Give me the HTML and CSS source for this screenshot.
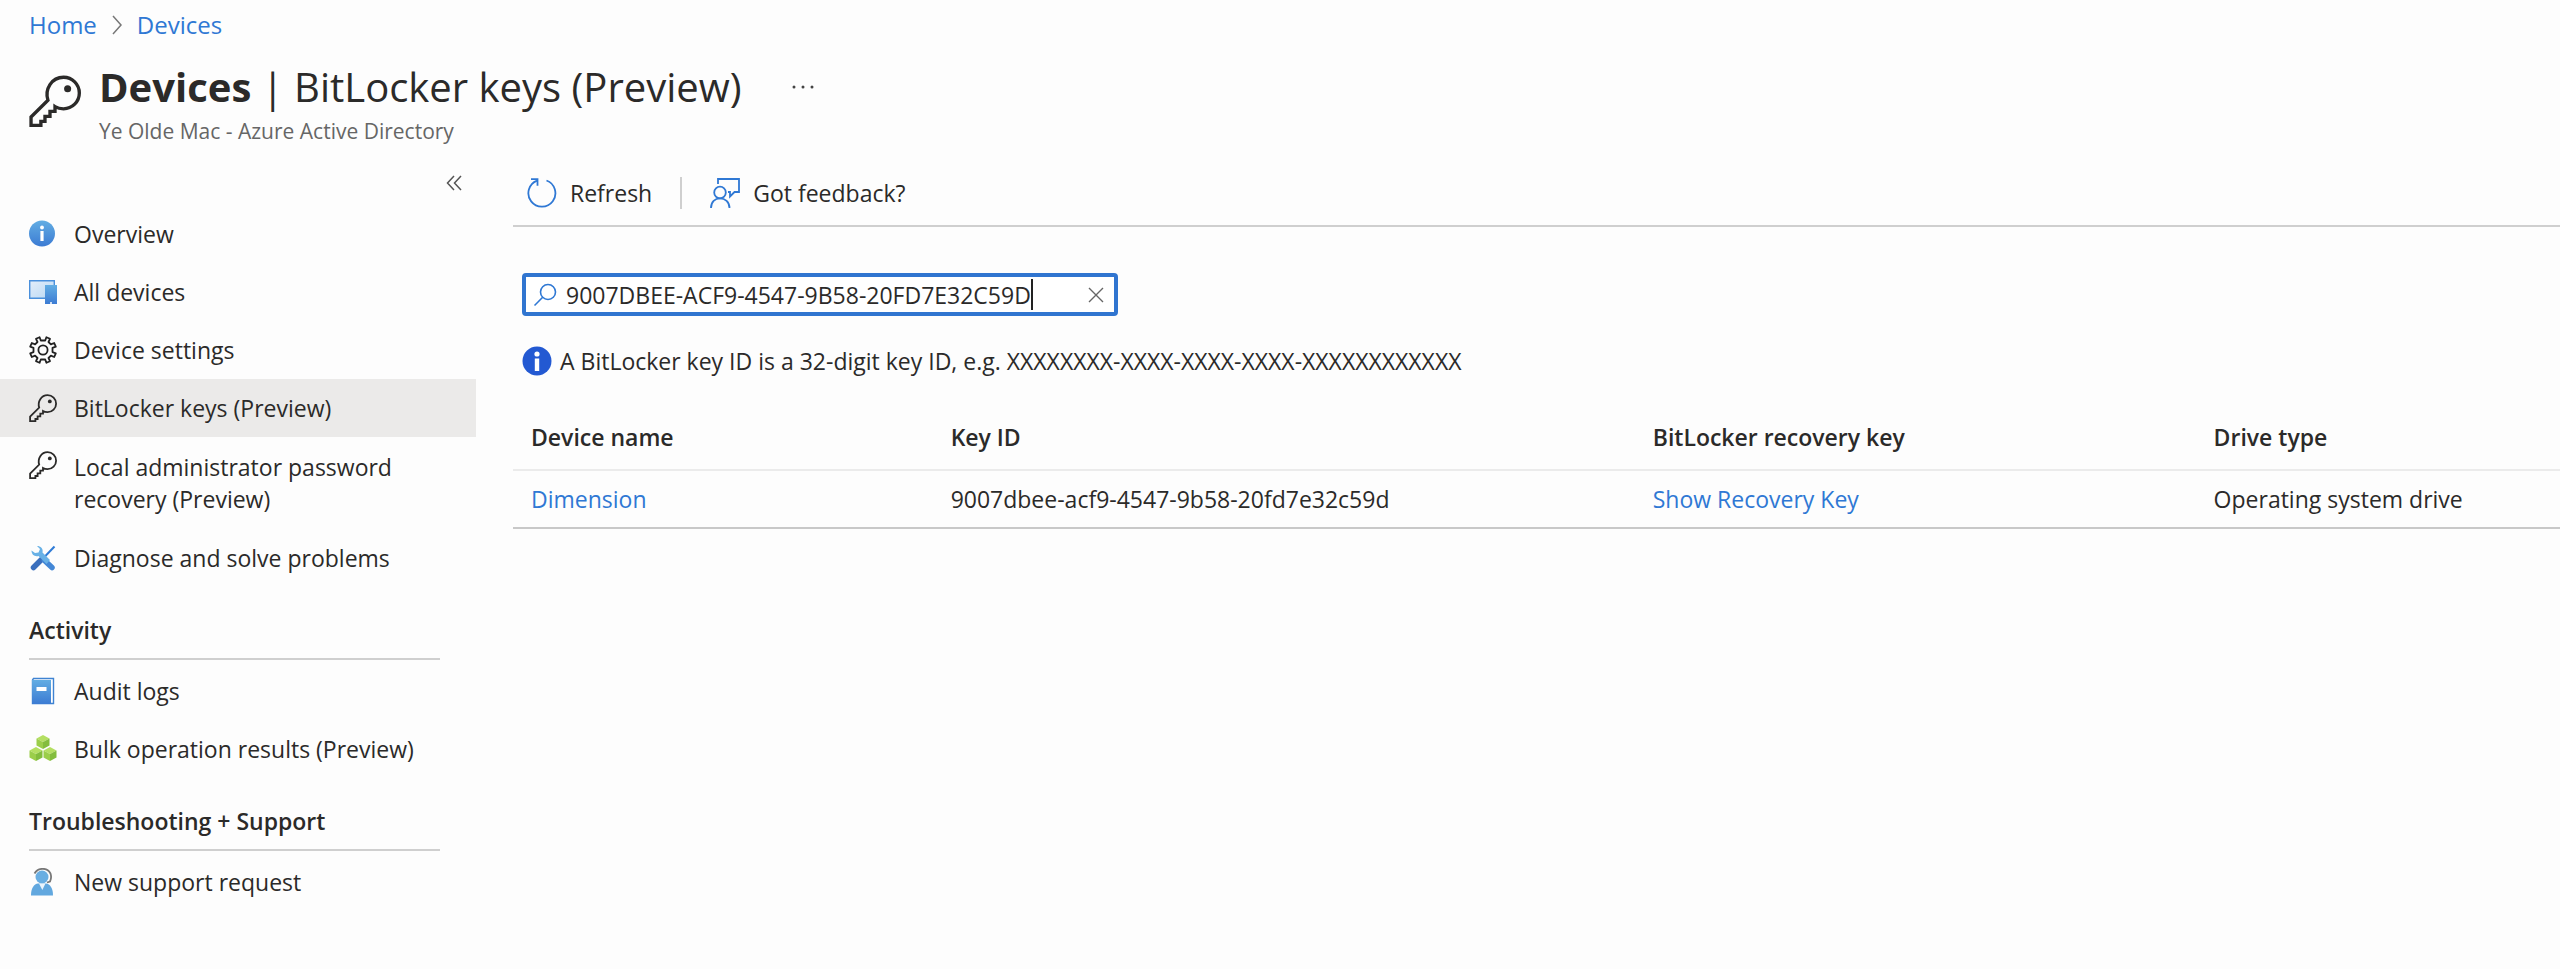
FILE: index.html
```html
<!DOCTYPE html>
<html lang="en">
<head>
    <meta charset="UTF-8">
    <meta name="viewport" content="width=device-width, initial-scale=1.0">
    <title>Devices | BitLocker keys (Preview)</title>
    <link rel="stylesheet" href="styles.css">
</head>
<body>
    <!-- shared shapes -->
    <svg class="defs" aria-hidden="true">
        <defs>
            <linearGradient id="blue" x1="0" y1="0" x2="0" y2="1">
                <stop offset="0" stop-color="#62ade3"/>
                <stop offset="1" stop-color="#3c7bd3"/>
            </linearGradient>
            <linearGradient id="screen" x1="0" y1="0" x2="1" y2="1">
                <stop offset="0" stop-color="#e4eefa"/>
                <stop offset="1" stop-color="#b9d8f3"/>
            </linearGradient>
        </defs>
        <symbol id="key" viewBox="0 0 28 28">
            <path d="M10.2 13.6C8.3 7.6 12.2 1.2 18.6 1.2a8.5 8.5 0 0 1 0 17c-1.700 0-3.300-.4-4.600-1.200v2.600h-2.700v2.700H8.600V25H6.400v2.100H1.100v-4.500z" fill="none" stroke="currentColor" stroke-width="1.800"/>
            <circle cx="20.800" cy="7.400" r="1.900" fill="currentColor"/>
        </symbol>
        <symbol id="cube" viewBox="0 0 14 14">
            <path d="M7 0l6.500 3.400L7 7 .5 3.400z" fill="#b4df62"/>
            <path d="M.5 3.400L7 7v7L.5 10.600z" fill="#9bce4a"/>
            <path d="M13.500 3.400L7 7v7l6.500-3.400z" fill="#83bd3d"/>
        </symbol>
    </svg>

    <header>
        <nav class="breadcrumb">
            <a href="#">Home</a>
            <svg class="chevron" viewBox="0 0 10 20"><path d="M1 1l8 9-8 9" fill="none" stroke="#777" stroke-width="1.5"/></svg>
            <a href="#">Devices</a>
        </nav>
        <div class="titlebar">
            <svg class="title-icon"><use href="#key"/></svg>
            <div>
                <div class="title-row">
                    <h1><b>Devices</b> | BitLocker keys (Preview)</h1>
                    <button class="more" aria-label="More">
                        <svg viewBox="0 0 22 4"><circle cx="2" cy="2" r="1.5"/><circle cx="11" cy="2" r="1.5"/><circle cx="20" cy="2" r="1.5"/></svg>
                    </button>
                </div>
                <p class="subtitle">Ye Olde Mac - Azure Active Directory</p>
            </div>
        </div>
    </header>

    <div class="container">
        <aside>
            <button class="collapse" aria-label="Collapse menu">
                <svg viewBox="0 0 16 16"><path d="M8 1L1.500 8 8 15M15 1L8.500 8 15 15" fill="none" stroke="#555" stroke-width="1.500"/></svg>
            </button>
            <nav>
                <a class="item" href="#">
                    <svg viewBox="0 0 28 28"><circle cx="13" cy="13.500" r="13" fill="url(#blue)"/><circle cx="13" cy="7.500" r="1.900" fill="#fff"/><path d="M11.400 11h3.200v10h-3.200z" fill="#fff"/></svg>
                    Overview
                </a>
                <a class="item" href="#">
                    <svg viewBox="0 0 28 28"><path d="M.7 2.700h24.600v17.500H.7z" fill="url(#screen)" stroke="#4a90dc" stroke-width="1.400"/><path d="M16 7h12v19H16z" fill="url(#blue)"/><circle cx="22" cy="25" r="1" fill="#fff"/></svg>
                    All devices
                </a>
                <a class="item" href="#">
                    <svg viewBox="0 0 28 28"><g fill="none" stroke="#222" stroke-width="1.800" stroke-linejoin="round"><path d="M11.800 4.500L10.600 1.200 7 2.800 8.500 6 6.100 8.400 2.800 7 1.200 10.700l3.300 1.200v4.200l-3.300 1.200L2.800 21l3.300-1.400L8.500 22 7 25.200l3.600 1.600 1.200-3.300h4.400l1.200 3.300 3.600-1.600-1.500-3.200 2.400-2.400 3.300 1.400 1.600-3.700-3.300-1.200v-4.200l3.300-1.200L25.200 7l-3.300 1.400L19.500 6 21 2.800l-3.600-1.600-1.200 3.300z"/><circle cx="14" cy="14" r="4.600"/></g></svg>
                    Device settings
                </a>
                <a class="item selected" href="#">
                    <svg><use href="#key"/></svg>
                    BitLocker keys (Preview)
                </a>
                <a class="item two-line" href="#">
                    <svg><use href="#key"/></svg>
                    Local administrator password recovery (Preview)
                </a>
                <a class="item" href="#">
                    <svg viewBox="0 0 28 28"><path d="M25.500 2.500L13 15.500" stroke="#2f7bd6" stroke-width="2"/><path d="M12.500 15.500L4.500 23.500" stroke="#3a6fbd" stroke-width="5.500" stroke-linecap="round"/><path d="M15.500 16.500l7.500 7" stroke="#4387d6" stroke-width="5.500" stroke-linecap="round"/><path d="M2.500 6.500c0 4 3 6.500 7 5.500l8 8 3.500-4-7.500-7.500c1-4-2-6.500-5.500-6.500L11 5 9.500 8.500 6 9z" fill="#68b1e6"/></svg>
                    Diagnose and solve problems
                </a>

                <h2>Activity</h2>
                <a class="item" href="#">
                    <svg viewBox="0 0 28 28"><path d="M4.500 1.500h20v25h-21V3z" fill="#fff" stroke="#3f83d2" stroke-width="1.400"/><path d="M3 3h19v24H3z" fill="url(#blue)"/><path d="M7.500 10h10v4h-10z" fill="#fff"/></svg>
                    Audit logs
                </a>
                <a class="item" href="#">
                    <svg viewBox="0 0 28 28"><use href="#cube" x="7" y="0" width="14" height="14"/><use href="#cube" x="0" y="12" width="14" height="14"/><use href="#cube" x="14" y="12" width="14" height="14"/></svg>
                    Bulk operation results (Preview)
                </a>

                <h2>Troubleshooting + Support</h2>
                <a class="item" href="#">
                    <svg viewBox="0 0 28 28"><path d="M5.500 5.500C9-.5 18-1 21.500 5.500c1 3 .5 6-.5 8l-3 1" fill="none" stroke="#777" stroke-width="1.800"/><circle cx="13" cy="9" r="6.500" fill="#69aee2"/><path d="M2 27.500C2 20 5 16 9 15.500h8c4 .5 7 4.500 7 12z" fill="#62a8df"/><path d="M10 15.500h6.500l-3.200 6.500z" fill="#eaf4fc"/></svg>
                    New support request
                </a>
            </nav>
        </aside>

        <main>
            <div class="toolbar">
                <button class="tool">
                    <svg viewBox="0 0 30 30"><path d="M19.500 2.500A13.500 13.500 0 1 1 10 2.600" fill="none" stroke="#2f78d4" stroke-width="1.800"/><path d="M4 1.200h6.500v6.500" fill="none" stroke="#2f78d4" stroke-width="1.800"/></svg>
                    Refresh
                </button>
                <span class="divider"></span>
                <button class="tool">
                    <svg viewBox="0 0 30 30"><g fill="none" stroke="#2f78d4" stroke-width="1.800"><path d="M8 6V1h21v13h-4.500L20 18.500V14h-2"/><circle cx="10" cy="14.500" r="5.800"/><path d="M1 30c0-6 4-9.700 9-9.700s9.500 3.700 9.500 9.700"/></g></svg>
                    Got feedback?
                </button>
            </div>

            <form>
                <div class="search">
                    <svg class="glass" viewBox="0 0 24 24"><g fill="none" stroke="#2f78d4" stroke-width="1.600"><circle cx="15" cy="9" r="7.500"/><path d="M9.700 14.300L1.500 22.500"/></g></svg>
                    <input type="text" id="keyId" aria-label="Key ID" value="9007DBEE-ACF9-4547-9B58-20FD7E32C59D">
                    <span class="caret"></span>
                    <button type="button" class="clear" aria-label="Clear">
                        <svg viewBox="0 0 16 16"><path d="M1 1l14 14M15 1L1 15" stroke="#666" stroke-width="1.400"/></svg>
                    </button>
                </div>
                <p class="hint">
                    <svg viewBox="0 0 30 30"><circle cx="15" cy="15" r="14.500" fill="#2359d2"/><circle cx="15" cy="8" r="2.600" fill="#fff"/><path d="M12.800 12.500h4.400v12.500h-4.400z" fill="#fff"/></svg>
                    A BitLocker key ID is a 32-digit key ID, e.g. XXXXXXXX-XXXX-XXXX-XXXX-XXXXXXXXXXXX
                </p>
            </form>

            <table>
                <thead>
                    <tr>
                        <th class="col-name">Device name</th>
                        <th class="col-id">Key ID</th>
                        <th class="col-key">BitLocker recovery key</th>
                        <th>Drive type</th>
                    </tr>
                </thead>
                <tbody>
                    <tr>
                        <td><a href="#">Dimension</a></td>
                        <td>9007dbee-acf9-4547-9b58-20fd7e32c59d</td>
                        <td><a href="#">Show Recovery Key</a></td>
                        <td>Operating system drive</td>
                    </tr>
                </tbody>
            </table>
        </main>
    </div>
</body>
</html>
```
FILE: styles.css
```css
*{
    margin: 0;
    padding: 0;
    box-sizing: border-box;
}
body{
    background-color: #fdfdfd;
    color: #2b2a29;
    font-family: "Open Sans", "Noto Sans", sans-serif;
    font-size: 23px;
    line-height: 32px;
}
a{
    color: #2f78d4;
    text-decoration: none;
}
button{
    background: none;
    border: none;
    color: inherit;
    font: inherit;
}
svg{
    display: block;
    flex-shrink: 0;
}
.defs{
    position: absolute;
    width: 0;
    height: 0;
}

/* header */
header{
    padding: 9px 29px 0;
}
.breadcrumb{
    display: flex;
    align-items: center;
    gap: 15px;
    font-size: 24px;
}
.chevron{
    width: 10px;
    height: 20px;
}
.titlebar{
    display: flex;
    align-items: center;
    gap: 18px;
    margin-top: 16px;
}
.title-icon{
    width: 52px;
    height: 52px;
}
.title-row{
    display: flex;
    align-items: center;
    gap: 50px;
}
h1{
    font-size: 40px;
    font-weight: 400;
    line-height: 60px;
}
h1 b{
    font-weight: 700;
}
.more svg{
    width: 22px;
    height: 4px;
    fill: #444;
}
.subtitle{
    color: #666;
    font-size: 21px;
    line-height: 28px;
}

/* layout */
.container{
    display: flex;
    gap: 37px;
    margin-top: 16px;
}
aside{
    width: 476px;
    flex-shrink: 0;
}
.collapse{
    display: block;
    margin: 14px 14px 14px auto;
}
.collapse svg{
    width: 16px;
    height: 16px;
}
.item{
    display: flex;
    align-items: center;
    gap: 17px;
    height: 58px;
    padding: 0 36px 0 29px;
    color: inherit;
}
.item svg{
    width: 28px;
    height: 28px;
}
.selected{
    background-color: #ebeae9;
}
.two-line{
    align-items: flex-start;
    height: auto;
    padding-top: 14px;
    padding-bottom: 14px;
}
h2{
    margin: 27px 36px 2px 29px;
    padding-bottom: 12px;
    border-bottom: 2px solid #cfcfcf;
    font-size: 23px;
    font-weight: 600;
    line-height: 32px;
}

/* content */
main{
    flex: 1;
}
.toolbar{
    display: flex;
    align-items: center;
    height: 66px;
    padding-left: 14px;
    gap: 28px;
    border-bottom: 2px solid #cfcfcf;
}
.tool{
    display: flex;
    align-items: center;
    gap: 13px;
}
.tool svg{
    width: 30px;
    height: 30px;
}
.divider{
    width: 2px;
    height: 32px;
    background-color: #cfcfcf;
}
form{
    padding: 46px 9px 0;
}
.search{
    display: flex;
    align-items: center;
    width: 596px;
    height: 43px;
    padding: 0 10px 0 7px;
    border: 4px solid #3075d0;
    border-radius: 4px;
    background-color: #fff;
}
.glass{
    width: 24px;
    height: 24px;
    margin-right: 9px;
}
#keyId{
    field-sizing: content;
    border: none;
    outline: none;
    background: none;
    color: inherit;
    font: inherit;
}
.caret{
    width: 2px;
    height: 31px;
    background-color: #222;
}
.clear{
    margin-left: auto;
}
.clear svg{
    width: 16px;
    height: 16px;
}
.hint{
    display: flex;
    align-items: center;
    gap: 8px;
    margin-top: 29px;
}
.hint svg{
    width: 30px;
    height: 30px;
}
table{
    width: 100%;
    margin-top: 28px;
    border-collapse: collapse;
    table-layout: fixed;
}
th, td{
    padding-left: 18px;
    text-align: left;
    white-space: nowrap;
}
th{
    height: 65px;
    border-bottom: 2px solid #ebebeb;
    font-weight: 600;
}
td{
    height: 58px;
    border-bottom: 2px solid #c8c8c8;
}
.col-name{
    width: 20.5%;
}
.col-id{
    width: 34.3%;
}
.col-key{
    width: 27.4%;
}
```
